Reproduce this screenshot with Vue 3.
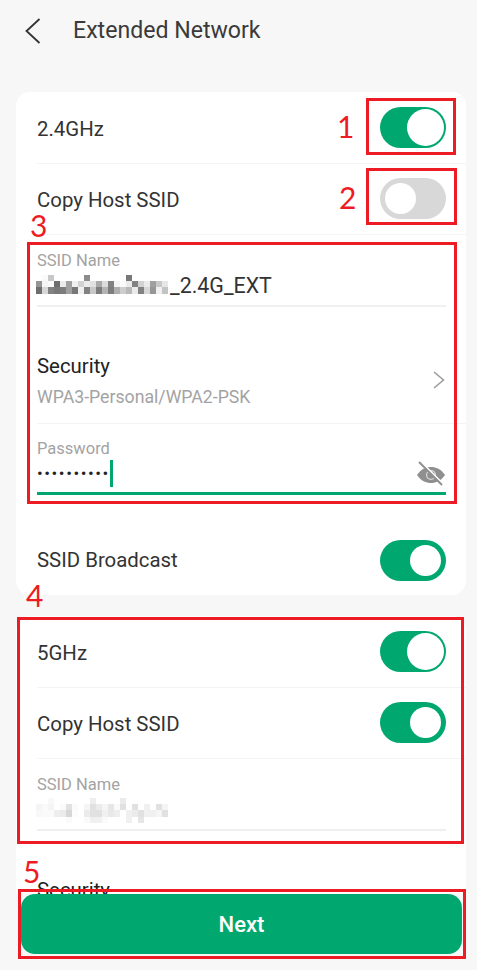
<script setup>
const shade = (v) => ({ background: `rgb(${v},${v},${v})` })
const rows1 = [
  [255,250,200,255,255,255,255,255,140,255,255,255,255,255,255,120,255,255,255,255,255,255],
  [150,245,250,110,235,160,240,210,235,225,170,220,130,245,250,235,130,210,235,160,200,230],
  [110,215,130,120,125,160,120,240,130,200,125,180,125,175,205,185,235,130,215,150,240,195]
]
const rows2 = [
  [255,255,248,255,255,255,255,255,255,238,255,255,255,255,235,255,255,255,255,255,255,255],
  [245,250,245,255,250,225,250,255,245,225,235,245,230,250,225,255,225,255,240,255,225,245],
  [248,250,250,238,235,215,252,255,235,225,225,240,232,238,255,240,235,225,240,240,245,225],
  [255,255,255,255,255,250,255,255,250,240,240,250,255,255,255,240,255,230,255,255,255,255]
]
</script>

<template>
  <div class="page">
    <header class="top">
      <svg class="back" width="18" height="28" viewBox="0 0 18 28"><path d="M15.5 2 L2.5 14 L15.5 26" fill="none" stroke="#333" stroke-width="1.8"/></svg>
      <span class="title">Extended Network</span>
    </header>

    <section class="card first">
      <div class="row h72 line"><span class="lbl low">2.4GHz</span><span class="sw on big"><i></i></span></div>
      <div class="row h72 line"><span class="lbl low">Copy Host SSID</span><span class="sw off"><i></i></span></div>
      <div class="field ssid">
        <span class="cap">SSID Name</span>
        <div class="val">
          <span class="mosaic"><span v-for="(r,i) in rows1" :key="i" class="mrow"><b v-for="(v,j) in r" :key="j" :style="shade(v)"></b></span></span><span>_2.4G_EXT</span>
        </div>
      </div>
      <div class="sec line">
        <div><div class="lbl dark">Security</div><div class="sub">WPA3-Personal/WPA2-PSK</div></div>
        <svg class="chev" width="12" height="18" viewBox="0 0 12 18"><path d="M1 1 L10.5 9 L1 17" fill="none" stroke="#999" stroke-width="1.5"/></svg>
      </div>
      <div class="field pass">
        <span class="cap">Password</span>
        <div class="val pw"><span class="dots">••••••••••</span><span class="caret"></span>
          <svg class="eye" width="30" height="26" viewBox="0 0 30 26"><path d="M1 14 C5 8 10 6 15 6 C20 6 25 8 29 14 C25 20 20 22 15 22 C10 22 5 20 1 14Z" fill="#8f8f8f"/><circle cx="15" cy="14" r="5" fill="#dcdcdc"/><circle cx="15" cy="14" r="3.8" fill="#8f8f8f"/><path d="M5 1 L28 24" stroke="#fff" stroke-width="2"/><path d="M3 1 L26 24" stroke="#8f8f8f" stroke-width="2"/></svg>
        </div>
      </div>
      <div class="row bcast"><span class="lbl">SSID Broadcast</span><span class="sw on"><i></i></span></div>
    </section>

    <section class="card second">
      <div class="row h72 line"><span class="lbl low">5GHz</span><span class="sw on big"><i></i></span></div>
      <div class="row h72 line"><span class="lbl low">Copy Host SSID</span><span class="sw on"><i></i></span></div>
      <div class="field ssid2">
        <span class="cap">SSID Name</span>
        <div class="val"><span class="mosaic m2"><span v-for="(r,i) in rows2" :key="i" class="mrow"><b v-for="(v,j) in r" :key="j" :style="shade(v)"></b></span></span></div>
      </div>
      <div class="sec2"><div class="lbl dark">Security</div></div>
    </section>

    <div class="footer"><button class="next">Next</button></div>

    <div class="mark k1"></div>
    <div class="mark k2"></div>
    <div class="mark k3"></div>
    <div class="mark k4"></div>
    <div class="mark k5"></div>
    <span class="num n1">1</span>
    <span class="num n2">2</span>
    <span class="num n3">3</span>
    <span class="num n4">4</span>
    <span class="num n5">5</span>
  </div>
</template>

<style>
html, body { margin: 0; background: #f7f7f7; }
</style>
<style scoped>
.page { position: relative; width: 477px; height: 970px; overflow: hidden; background: #f7f7f7; font-family: Roboto, "Noto Sans", sans-serif; color: #333; }
.top { height: 92px; box-sizing: border-box; padding: 17px 0 0 24px; display: flex; align-items: flex-start; }
.back { flex: none; }
.title { margin-left: 31px; font-size: 23.1px; line-height: 28px; color: #3a3a3a; }
.card { margin: 0 11px 0 16px; background: #fff; border-radius: 14px; padding-left: 21px; }
.first { height: 503px; }
.second { margin-top: 21px; height: 400px; border-radius: 14px 14px 0 0; }
.row { display: flex; align-items: center; justify-content: space-between; padding-right: 20px; box-sizing: border-box; }
.h72 { height: 71.5px; }
.line { border-bottom: 1px solid #f4f4f4; }
.lbl { font-size: 20.4px; line-height: 24px; color: #333; }
.low { margin-top: 3px; }
.dark { color: #222; }
.sw { width: 66px; height: 41px; border-radius: 21px; box-sizing: border-box; padding: 5px; display: flex; justify-content: flex-end; background: #00a870; }
.sw i { width: 31px; height: 31px; border-radius: 50%; background: #fff; display: block; }
.sw.big { padding: 2px; }
.sw.big i { width: 37px; height: 37px; }
.sw.off { background: #d8d8d8; justify-content: flex-start; }
.field { position: relative; margin-right: 20px; box-sizing: border-box; }
.cap { display: block; font-size: 16.5px; line-height: 20px; color: #a3a3a3; }
.ssid { height: 72px; padding-top: 16px; }
.ssid .val { border-bottom: 2px solid #f0f0f0; height: 36px; box-sizing: border-box; }
.val { display: flex; font-size: 21.4px; line-height: 30px; color: #333; }
.mosaic { display: block; width: 132px; margin: 4px 2px 0 -1px; }
.mrow { display: flex; height: 6.2px; }
.mrow b { width: 6px; flex: none; }
.sec { height: 117px; display: flex; align-items: flex-start; justify-content: space-between; padding: 47px 21px 0 0; box-sizing: border-box; }
.chev { margin-top: 17px; }
.sub { font-size: 17.7px; line-height: 22px; color: #a3a3a3; margin-top: 8px; }
.pass { height: 71px; padding-top: 15px; }
.pw { position: relative; height: 36px; box-sizing: border-box; border-bottom: 3px solid #00a870; }
.dots { font-size: 17px; line-height: 28px; letter-spacing: 1.55px; color: #222; }
.caret { width: 3px; height: 27px; background: #00a870; margin: 1px 0 0 0; }
.eye { position: absolute; right: 0; top: 2px; }
.bcast { height: 100px; padding-top: 30px; }
.ssid2 { height: 72px; padding-top: 16px; }
.ssid2 .val { height: 36px; box-sizing: border-box; border-bottom: 2px solid #efefef; }
.m2 { margin-top: 3px; }
.sec2 { padding-top: 47px; }
.footer { position: absolute; left: 0; right: 0; bottom: 0; padding: 0 15px 0 21px; height: 76px; background: #f7f7f7; box-sizing: border-box; }
.next { display: block; width: 100%; height: 60px; border: 0; border-radius: 14px; background: #00a870; color: #fff; font: 500 22px Roboto, sans-serif; }
.mark { position: absolute; box-sizing: border-box; border: 3px solid #ed1c24; }
.k1 { left: 366px; top: 98px; width: 90px; height: 57px; }
.k2 { left: 366px; top: 168px; width: 91px; height: 57px; }
.k3 { left: 27px; top: 242px; width: 430px; height: 262px; }
.k4 { left: 17px; top: 617px; width: 447px; height: 227px; }
.k5 { left: 18px; top: 889px; width: 448px; height: 70px; }
.num { position: absolute; color: #ed1c24; font: 30px/34px Lato, "Liberation Sans", sans-serif; }
.n1 { left: 337px; top: 109px; }
.n2 { left: 339px; top: 180px; }
.n3 { left: 30px; top: 208px; }
.n4 { left: 26px; top: 578px; }
.n5 { left: 23px; top: 854px; }
</style>
